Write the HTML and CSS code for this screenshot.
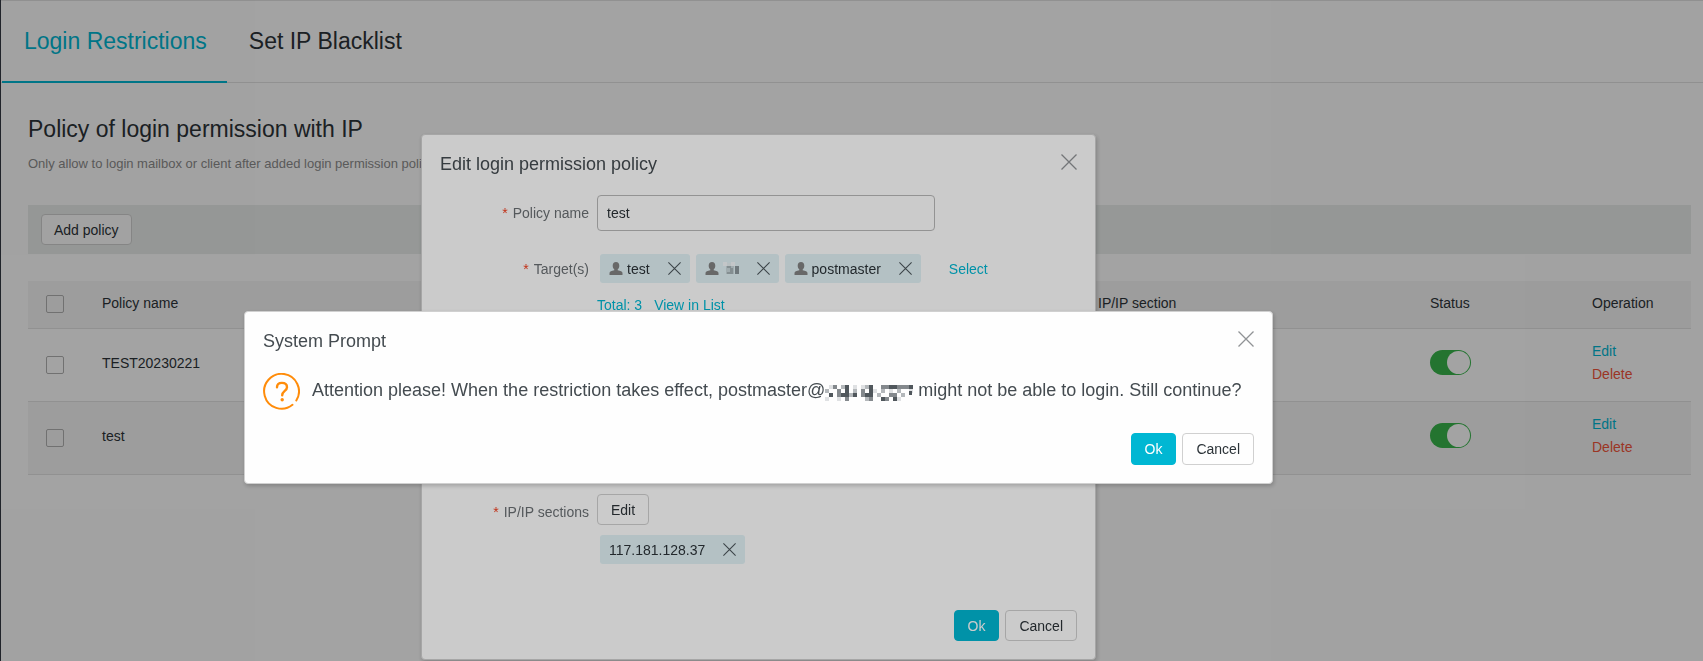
FILE: index.html
```html
<!DOCTYPE html>
<html lang="en">
<head>
  <meta charset="UTF-8">
  <title>Login Restrictions</title>
  <link rel="stylesheet" href="styles.css">
</head>
<body>

  <!-- Icons -->
  <svg class="sprite" width="0" height="0">
    <symbol id="close" viewBox="0 0 16 16">
      <path d="M0.5 0.5L15.5 15.5M15.5 0.5L0.5 15.5" fill="none" stroke="currentColor" stroke-width="1.3"/>
    </symbol>
    <symbol id="user" viewBox="0 0 14 13">
      <path d="M7 0C4.800 0 3.700 1.500 3.700 3.700C3.700 5.300 4.400 6.700 5.300 7.400V8.200C2.600 8.800 0.500 9.300 0.500 11V13H13.500V11C13.500 9.300 11.400 8.800 8.700 8.200V7.400C9.600 6.700 10.300 5.300 10.300 3.700C10.300 1.500 9.200 0 7 0Z" fill="currentColor"/>
    </symbol>
  </svg>

  <div class="page">
    <nav class="tabs">
      <a class="tab active" href="#">Login Restrictions</a>
      <a class="tab" href="#">Set IP Blacklist</a>
    </nav>

    <main class="content">
      <h1>Policy of login permission with IP</h1>
      <p class="desc">Only allow to login mailbox or client after added login permission policy</p>

      <div class="toolbar">
        <button class="btn" type="button">Add policy</button>
      </div>

      <table class="policies">
        <thead>
          <tr>
            <th class="col-check"><input type="checkbox" class="check" aria-label="Select all"></th>
            <th>Policy name</th>
            <th class="col-ip">IP/IP section</th>
            <th class="col-status">Status</th>
            <th class="col-op">Operation</th>
          </tr>
        </thead>
        <tbody>
          <tr>
            <td class="col-check"><input type="checkbox" class="check" aria-label="Select TEST20230221"></td>
            <td>TEST20230221</td>
            <td></td>
            <td><input type="checkbox" class="switch" role="switch" aria-label="Status" checked></td>
            <td><a class="op" href="#">Edit</a><a class="op delete" href="#">Delete</a></td>
          </tr>
          <tr>
            <td class="col-check"><input type="checkbox" class="check" aria-label="Select test"></td>
            <td>test</td>
            <td></td>
            <td><input type="checkbox" class="switch" role="switch" aria-label="Status" checked></td>
            <td><a class="op" href="#">Edit</a><a class="op delete" href="#">Delete</a></td>
          </tr>
        </tbody>
      </table>
    </main>
  </div>

  <!-- Edit policy dialog -->
  <div class="overlay overlay-edit">
    <form class="dialog dialog-edit">
      <header class="dialog-head">
        <h2>Edit login permission policy</h2>
        <button class="close" type="button" aria-label="Close"><svg width="16" height="16"><use href="#close"/></svg></button>
      </header>

      <div class="row row-name">
        <label class="label" for="policy-name"><i>*</i>Policy name</label>
        <input class="text" id="policy-name" type="text" value="test">
      </div>

      <div class="row row-targets">
        <span class="label"><i>*</i>Target(s)</span>
        <div class="tags">
          <span class="tag"><svg width="14" height="13"><use href="#user"/></svg>test
            <button type="button" aria-label="Remove"><svg width="13" height="13"><use href="#close"/></svg></button></span>
          <span class="tag"><svg width="14" height="13"><use href="#user"/></svg>
            <svg class="masked" width="16" height="14">
              <path fill="#f4f8fa" d="M0 0h4v4h-4zM8 0h4v4h-4z"/>
              <path fill="#e6eff2" d="M4 1h4v3h-4z"/>
              <path fill="#c8d6da" d="M3 4h8v8h-8z"/>
              <path fill="#a5b2b6" d="M4 4h4v2h-4zM7 6h3v6h-3zM4 10h3v2h-3z"/>
              <path fill="#8b979b" d="M12 4h4v8h-4z"/>
            </svg>
            <button type="button" aria-label="Remove"><svg width="13" height="13"><use href="#close"/></svg></button></span>
          <span class="tag"><svg width="14" height="13"><use href="#user"/></svg>postmaster
            <button type="button" aria-label="Remove"><svg width="13" height="13"><use href="#close"/></svg></button></span>
        </div>
        <a class="select" href="#">Select</a>
      </div>

      <div class="row row-total">
        <span class="label"></span>
        <a href="#">Total: 3</a>
        <a href="#">View in List</a>
      </div>

      <div class="row row-ip">
        <span class="label"><i>*</i>IP/IP sections</span>
        <div>
          <button class="btn" type="button">Edit</button>
          <div class="tags">
            <span class="tag">117.181.128.37
              <button type="button" aria-label="Remove"><svg width="13" height="13"><use href="#close"/></svg></button></span>
          </div>
        </div>
      </div>

      <footer class="dialog-foot">
        <button class="btn primary" type="button">Ok</button>
        <button class="btn" type="button">Cancel</button>
      </footer>
    </form>
  </div>

  <!-- System prompt -->
  <div class="overlay overlay-prompt">
    <section class="dialog dialog-prompt">
      <header class="dialog-head">
        <h2>System Prompt</h2>
        <button class="close" type="button" aria-label="Close"><svg width="16" height="16"><use href="#close"/></svg></button>
      </header>

      <div class="message">
        <svg class="question" width="37" height="37" viewBox="0 0 37 37" fill="none" stroke="#ff8c0a" stroke-width="2" stroke-linecap="round">
          <path d="M29.500 31.800A17.400 17.400 0 1 1 33.300 27.500"/>
          <path stroke-width="2.400" d="M14 14.300C14 11.500 16 9.900 18.900 9.900C21.800 9.900 24 11.500 24 14.200C24 18 19.200 17.800 19.200 22.300"/>
          <circle cx="19.200" cy="26.800" r="1.700" fill="#ff8c0a" stroke="none"/>
        </svg>
        <p>Attention please! When the restriction takes effect, postmaster@<svg class="mosaic" width="90" height="18">
            <path fill="#dfe1e3" d="M4 2h4v4h-4zM0 14h4v4h-4zM12 14h4v4h-4zM28 2h4v4h-4zM36 2h4v4h-4zM48 6h4v4h-4zM56 2h4v4h-4zM72 14h4v4h-4zM84 6h4v4h-4zM64 6h4v4h-4z"/>
            <path fill="#b4b8bb" d="M0 6h4v4h-4zM16 2h4v4h-4zM28 6h4v4h-4zM40 2h4v4h-4zM52 10h4v4h-4zM56 6h4v4h-4zM40 14h4v4h-4zM72 6h4v4h-4zM76 10h4v4h-4zM24 10h4v4h-4z"/>
            <path fill="#84898d" d="M8 2h4v4h-4zM12 6h4v8h-4zM20 14h4v4h-4zM36 6h4v8h-4zM44 14h4v4h-4zM56 2h8v4h-8zM72 2h8v4h-8zM64 10h8v4h-8zM80 2h4v4h-4zM60 14h4v4h-4z"/>
            <path fill="#50575c" d="M4 10h4v4h-4zM20 2h4v12h-4zM16 10h4v4h-4zM28 10h4v4h-4zM44 2h4v12h-4zM40 10h4v4h-4zM64 2h8v4h-8zM56 14h4v4h-4zM68 14h4v4h-4zM84 2h4v4h-4zM84 8h3v4h-3z"/>
          </svg>might not be able to login. Still continue?</p>
      </div>

      <footer class="dialog-foot">
        <button class="btn primary" type="button">Ok</button>
        <button class="btn" type="button">Cancel</button>
      </footer>
    </section>
  </div>

</body>
</html>
```
FILE: styles.css
```css
* {
  box-sizing: border-box;
}
body {
  margin: 0;
  min-height: 100vh;
  background: #fefefe;
  border-left: 1px solid #333842;
  color: #2c3338;
  font-family: "Liberation Sans", Arial, sans-serif;
  font-size: 14px;
  line-height: 20px;
  overflow: hidden;
}
h1, h2, p {
  margin: 0;
  font-weight: normal;
}
a {
  color: #00b7d3;
  text-decoration: none;
}
button, input {
  font: inherit;
  color: inherit;
  margin: 0;
}
button {
  cursor: pointer;
}
.sprite {
  position: absolute;
}

/* Tabs */
.page {
  border-top: 1px solid #e2e2e2;
}
.tabs {
  display: flex;
  padding-left: 1px;
  border-bottom: 1px solid #e2e2e2;
}
.tab {
  height: 82px;
  margin-bottom: -1px;
  padding: 0 20px 0 22px;
  font-size: 23px;
  line-height: 80px;
  color: #2c3338;
}
.tab.active {
  color: #00b7d3;
  border-bottom: 2px solid #00b7d3;
}

/* Page content */
.content {
  padding: 30px 12px 0 27px;
}
h1 {
  font-size: 23px;
  line-height: 32px;
}
.desc {
  margin-top: 9px;
  font-size: 13px;
  color: #8c8c8c;
}
.toolbar {
  display: flex;
  align-items: center;
  height: 49px;
  margin-top: 31px;
  padding: 0 13px;
  background: #e9edeb;
}
.btn {
  height: 31px;
  padding: 0 13px;
  border: 1px solid #d0d0d0;
  border-radius: 4px;
  background: transparent;
}
.toolbar .btn {
  padding: 0 12px;
  background: #fefefe;
}
.btn.primary {
  border-color: #00b7d3;
  background: #00b7d3;
  color: #fff;
}

/* Table */
.policies {
  width: 100%;
  margin-top: 27px;
  border-collapse: collapse;
  table-layout: fixed;
}
.policies th,
.policies td {
  height: 73px;
  padding: 0 0 4px;
  border-bottom: 1px solid #e2e2e2;
  text-align: left;
  font-weight: normal;
}
.policies th {
  height: 47px;
  padding-bottom: 2px;
  background: #f4f4f4;
}
.policies .col-check {
  width: 74px;
  padding-bottom: 0;
}
.policies tbody tr:nth-child(even) {
  background: #f4f4f4;
}
.col-ip { width: 332px; }
.col-status { width: 162px; }
.col-op { width: 99px; }
.check {
  display: block;
  width: 18px;
  height: 18px;
  margin-left: 18px;
  appearance: none;
  border: 1px solid #b0b0b0;
  border-radius: 2px;
}
.switch {
  display: flex;
  justify-content: flex-end;
  align-items: center;
  width: 41px;
  height: 25px;
  padding: 1px;
  appearance: none;
  border-radius: 13px;
  background: #38b54b;
}
.switch::after {
  content: "";
  width: 23px;
  height: 23px;
  border-radius: 50%;
  background: #fefefe;
}
.op {
  display: block;
  line-height: 23px;
}
.op.delete {
  color: #f2543a;
}

/* Dialogs */
.overlay {
  position: fixed;
  inset: 0;
  display: flex;
  justify-content: center;
  align-items: flex-start;
  padding-right: 186px;
  background: rgba(0, 0, 0, 0.2);
}
.overlay-edit {
  padding-top: 134px;
}
.overlay-prompt {
  padding-top: 311px;
}
.dialog {
  padding: 0 18px 18px;
  border: 1px solid #d0d0d0;
  border-radius: 4px;
  background: #fefefe;
  box-shadow: 1px 2px 4px rgba(0, 0, 0, 0.2);
}
.dialog-edit {
  width: 675px;
}
.dialog-prompt {
  width: 1029px;
}
.dialog-head {
  display: flex;
  justify-content: space-between;
  align-items: center;
  height: 58px;
}
.dialog-head h2 {
  font-size: 18px;
  color: #444b50;
}
.close {
  padding: 0;
  border: 0;
  background: none;
  color: #909396;
}
.close svg {
  display: block;
}
.dialog-head .close {
  margin-top: -5px;
}
.dialog-foot {
  display: flex;
  justify-content: flex-end;
  gap: 6px;
}

/* Edit form */
.row {
  display: flex;
  align-items: center;
}
.row-name {
  margin-top: 2px;
}
.label {
  width: 149px;
  margin-right: 8px;
  text-align: right;
  color: #6b7074;
}
.label i {
  margin-right: 5px;
  font-style: normal;
  color: #f23c1c;
}
.text {
  width: 338px;
  height: 36px;
  padding: 0 9px;
  border: 1px solid #b8b8b8;
  border-radius: 4px;
  background: #fefefe;
}
.row-targets {
  margin-top: 23px;
}
.tags {
  display: flex;
  gap: 6px;
  padding-left: 3px;
}
.tag {
  display: flex;
  align-items: center;
  gap: 4px;
  height: 29px;
  padding: 0 9px;
  border-radius: 3px;
  background: #e1f2f6;
}
.tag > svg {
  color: #838383;
}
.tag button {
  display: flex;
  margin-left: 14px;
  padding: 0;
  border: 0;
  background: none;
  color: #4b5459;
}
.select {
  margin-left: 28px;
}
.row-total {
  gap: 12px;
  margin-top: 12px;
}
.row-total .label {
  margin-right: -4px;
}
.row-ip {
  align-items: flex-start;
  margin-top: 179px;
}
.row-ip .label {
  padding-top: 8px;
}
.row-ip .tags {
  margin-top: 10px;
}
.dialog-edit .dialog-foot {
  margin-top: 46px;
}

/* Prompt */
.message {
  display: flex;
  gap: 12px;
  margin-top: 3px;
  font-size: 18px;
  color: #444b50;
}
.message p {
  line-height: 34px;
  white-space: nowrap;
}
.mosaic {
  margin-right: 3px;
  vertical-align: -5px;
}
.dialog-prompt .dialog-foot {
  margin-top: 23px;
}
.dialog-prompt .btn {
  height: 32px;
}
```
